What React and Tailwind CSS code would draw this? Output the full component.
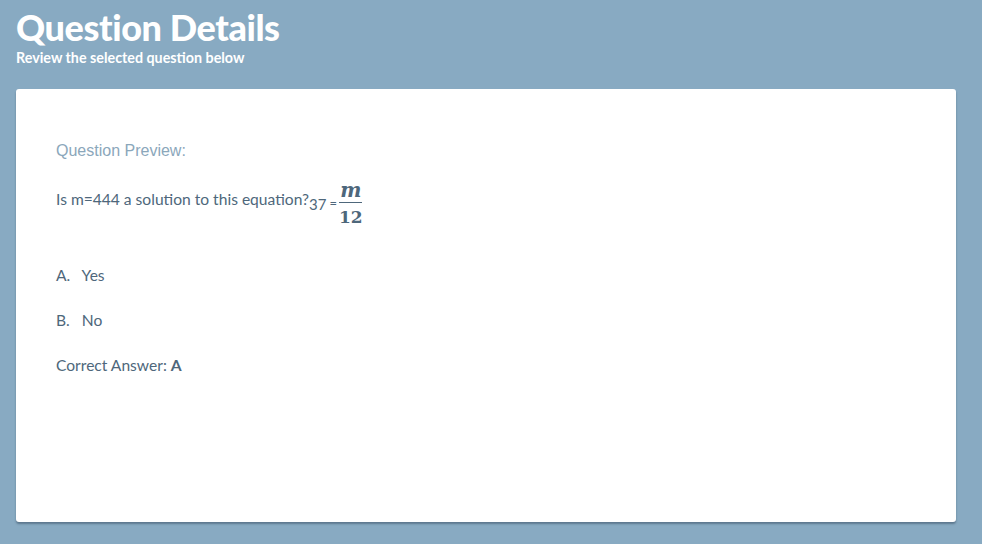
export default function App() {
    return (
        <div className="min-h-[544px] w-full bg-[#88aac2] px-4 pt-[5px] pb-[21px] font-['Lato',sans-serif]">
            <h1 className="text-[36px] font-black leading-[44px] tracking-[-0.4px] text-white">
                Question Details
            </h1>
            <p className="text-[14.3px] font-bold leading-[18px] text-white">
                Review the selected question below
            </p>
            <div className="mt-[22px] h-[433px] w-[940px] rounded-[3px] bg-white px-10 pt-[52px] shadow-[0_2px_2px_rgba(40,60,80,0.45)]">
                <div className="font-['Liberation_Sans',sans-serif] text-[16px] leading-5 text-[#8ba7bb]">
                    Question Preview:
                </div>
                <div className="mt-[17px] flex items-center text-[15.6px] text-[#4e677b]">
                    <span className="mt-[-10px]">Is m=444 a solution to this equation?</span>
                    <span className="text-[15px]">37</span>
                    <span className="ml-[3px] mt-[-1px] text-[13px]">=</span>
                    <span className="ml-[2px] flex flex-col items-center font-['DejaVu_Serif',serif] font-bold text-[#4e677b]">
                        <span className="text-[20px] italic leading-[24px]">m</span>
                        <span className="h-[1px] w-[23px] bg-[#4e677b]"></span>
                        <span className="text-[17px] leading-[28px]">12</span>
                    </span>
                </div>
                <div className="mt-[34px] text-[15.6px] leading-5 text-[#4e677b]">
                    <div>A.&nbsp;&nbsp; Yes</div>
                    <div className="mt-[25px]">B.&nbsp;&nbsp; No</div>
                    <div className="mt-[25px]">
                        Correct Answer: <b>A</b>
                    </div>
                </div>
            </div>
        </div>
    )
}
